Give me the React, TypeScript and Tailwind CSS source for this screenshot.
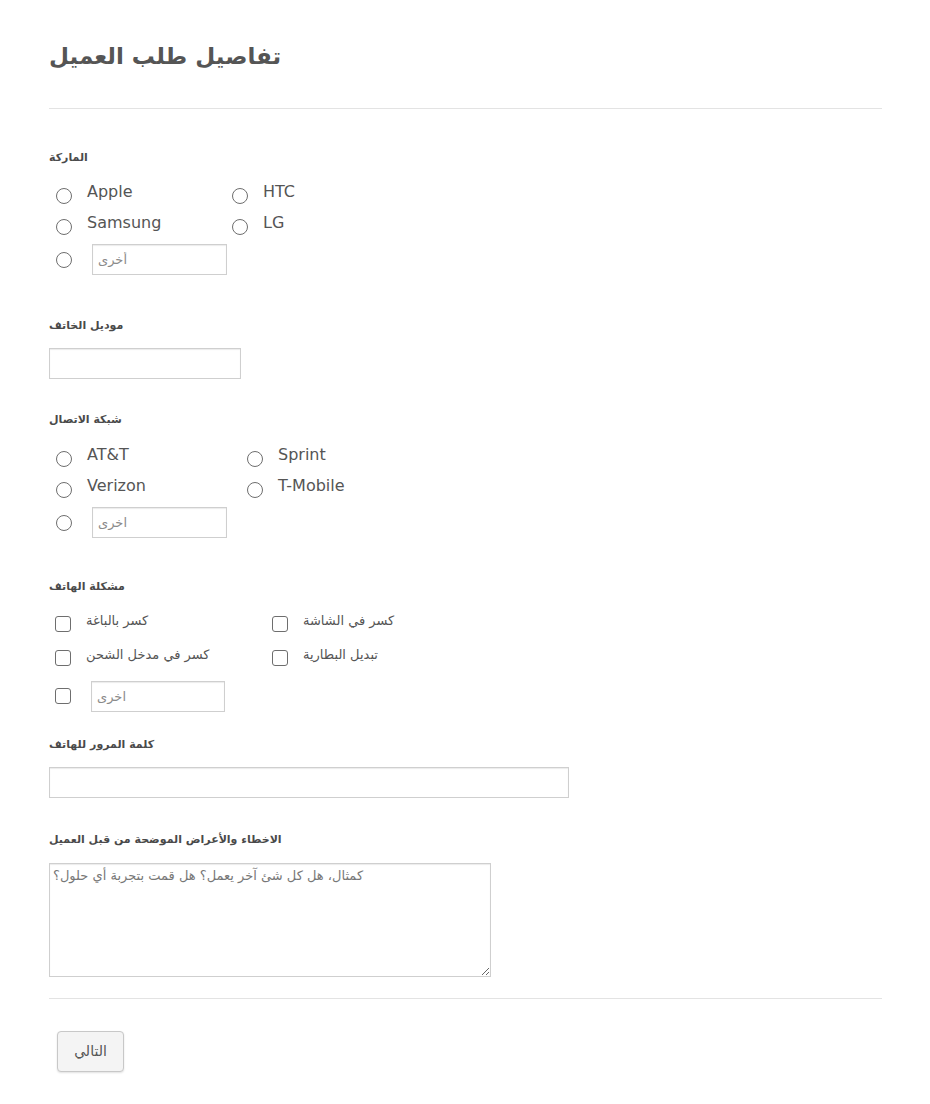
import React from 'react';

function Radio() {
  return <span className="mt-[7px] block h-4 w-4 shrink-0 rounded-full border border-[#6e6e6e] bg-white" />;
}

function Check() {
  return <span className="mt-[3px] block h-4 w-4 shrink-0 rounded-[3px] border border-[#6e6e6e] bg-white" />;
}

function OtherInput({ placeholder, width }: { placeholder: string; width: string }) {
  return (
    <input
      type="text"
      dir="rtl"
      placeholder={placeholder}
      className={`h-[31px] ${width} border border-[#cfcfcf] bg-white px-[5px] text-left text-[13px] text-[#555] shadow-[inset_0_1px_1px_rgba(0,0,0,0.08)] outline-none placeholder:text-[#8a8a8a]`}
    />
  );
}

function Label({ children }: { children: React.ReactNode }) {
  return <div className="text-[11px] font-bold leading-[16px] text-[#4a4a4a]">{children}</div>;
}

function RadioGroup({ items, other, colWidth }: { items: string[]; other: string; colWidth: string }) {
  return (
    <div className={`grid ${colWidth} pl-[7px]`}>
      {items.map((item) => (
        <div key={item} className="flex h-[31px] items-start">
          <Radio />
          <span className="ml-[15px] mt-px text-[16px] leading-[20px] text-[#555]">{item}</span>
        </div>
      ))}
      <div className="flex h-[32px] items-center pt-px">
        <span className="block h-4 w-4 shrink-0 rounded-full border border-[#6e6e6e] bg-white" />
        <span className="ml-[20px]">
          <OtherInput placeholder={other} width="w-[135px]" />
        </span>
      </div>
    </div>
  );
}

export default function App() {
  const problems = ['كسر بالباغة', 'كسر في الشاشة', 'كسر في مدخل الشحن', 'تبديل البطارية'];

  return (
    <div className="min-h-screen bg-white pl-[49px] pr-[48px] font-['DejaVu_Sans',sans-serif] text-[#555]">
      {/* Header */}
      <div className="pt-[38px]">
        <h1 className="text-[23px] font-bold leading-[36px] text-[#555]">تفاصيل طلب العميل</h1>
      </div>
      <div className="mt-[34px] h-px bg-[#e3e3e3]" />

      {/* Brand */}
      <div className="mt-[41px]">
        <Label>الماركة</Label>
        <div className="mt-[15px]">
          <RadioGroup items={['Apple', 'HTC', 'Samsung', 'LG']} other="أخرى" colWidth="grid-cols-[176px_1fr]" />
        </div>
      </div>

      {/* Model */}
      <div className="mt-[43px]">
        <Label>موديل الخاتف</Label>
        <input
          type="text"
          className="mt-[14px] block h-[31px] w-[192px] border border-[#cfcfcf] bg-white shadow-[inset_0_1px_1px_rgba(0,0,0,0.08)] outline-none"
        />
      </div>

      {/* Network */}
      <div className="mt-[33px]">
        <Label>شبكة الاتصال</Label>
        <div className="mt-[16px]">
          <RadioGroup items={['AT&T', 'Sprint', 'Verizon', 'T-Mobile']} other="اخرى" colWidth="grid-cols-[191px_1fr]" />
        </div>
      </div>

      {/* Problem */}
      <div className="mt-[41px]">
        <Label>مشكلة الهاتف</Label>
        <div className="mt-[18px] grid grid-cols-[217px_1fr] pl-[6px]">
          {problems.map((p) => (
            <div key={p} className="flex h-[34px] items-start">
              <Check />
              <span className="ml-[15px] text-[13px] leading-[16px] text-[#555]">{p}</span>
            </div>
          ))}
          <div className="flex h-[30px] items-center">
            <span className="block h-4 w-4 shrink-0 rounded-[3px] border border-[#6e6e6e] bg-white" />
            <span className="ml-[20px]">
              <OtherInput placeholder="اخرى" width="w-[134px]" />
            </span>
          </div>
        </div>
      </div>

      {/* Password */}
      <div className="mt-[26px]">
        <Label>كلمة المرور للهاتف</Label>
        <input
          type="text"
          className="mt-[14px] block h-[31px] w-[520px] border border-[#cfcfcf] bg-white shadow-[inset_0_1px_1px_rgba(0,0,0,0.08)] outline-none"
        />
      </div>

      {/* Symptoms */}
      <div className="mt-[34px]">
        <Label>الاخطاء والأعراض الموضحة من قبل العميل</Label>
        <textarea
          placeholder={'كمثال، هل كل شئ آخر يعمل؟ هل قمت بتجربة أي حلول؟\u200F'}
          className="mt-[15px] block h-[114px] w-[442px] resize border border-[#cfcfcf] bg-white px-[3px] py-[3px] text-left text-[13px] leading-[18px] text-[#555] shadow-[inset_0_1px_1px_rgba(0,0,0,0.08)] outline-none placeholder:text-[#777]"
        />
      </div>

      <div className="mt-[21px] h-px bg-[#e3e3e3]" />

      {/* Footer */}
      <div className="mt-[32px] pb-8">
        <button
          type="button"
          className="ml-[8px] h-[41px] w-[67px] rounded-[4px] border border-[#c8c8c8] bg-[#f4f4f4] text-[14px] text-[#555] shadow-[0_1px_2px_rgba(0,0,0,0.12)]"
        >
          التالي
        </button>
      </div>
    </div>
  );
}
